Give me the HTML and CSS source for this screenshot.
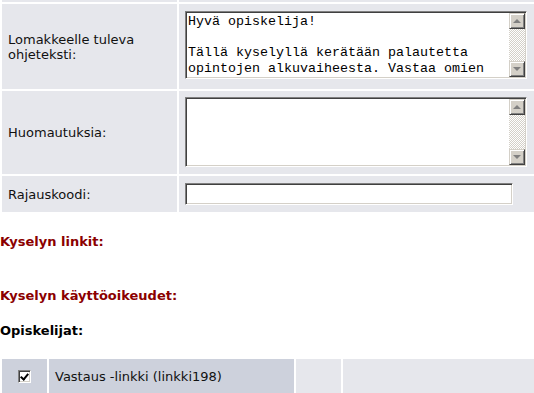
FILE: index.html
```html
<!DOCTYPE html>
<html lang="fi">
<head>
    <meta charset="UTF-8">
    <meta name="viewport" content="width=device-width, initial-scale=1.0">
    <title>Kyselyn tiedot</title>
    <link rel="stylesheet" href="styles.css">
</head>
<body>
    <div class="form-grid">
        <div class="cell"></div>
        <div class="cell"></div>

        <div class="cell label">Lomakkeelle tuleva ohjeteksti:</div>
        <div class="cell value">
            <div class="textbox tb-guide">
                <div class="textbox-text">Hyvä opiskelija!

Tällä kyselyllä kerätään palautetta opintojen alkuvaiheesta. Vastaa omien</div>
                <div class="scrollbar">
                    <span class="sb-btn sb-up"></span>
                    <span class="sb-track"></span>
                    <span class="sb-btn sb-down"></span>
                </div>
            </div>
        </div>

        <div class="cell label">Huomautuksia:</div>
        <div class="cell value value-notes">
            <div class="textbox tb-notes">
                <div class="textbox-text"></div>
                <div class="scrollbar">
                    <span class="sb-btn sb-up"></span>
                    <span class="sb-track"></span>
                    <span class="sb-btn sb-down"></span>
                </div>
            </div>
        </div>

        <div class="cell label">Rajauskoodi:</div>
        <div class="cell value">
            <div class="input"></div>
        </div>
    </div>

    <h4 class="section-title red first">Kyselyn linkit:</h4>
    <h4 class="section-title red second">Kyselyn käyttöoikeudet:</h4>
    <h4 class="section-title third">Opiskelijat:</h4>

    <div class="rights-row">
        <div class="rcell dark check-cell"><span class="checkbox"></span></div>
        <div class="rcell dark">Vastaus -linkki (linkki198)</div>
        <div class="rcell"></div>
        <div class="rcell"></div>
    </div>
</body>
</html>
```

FILE: styles.css
```css
* {
    box-sizing: border-box;
}
body {
    margin: 0;
    font-family: "DejaVu Sans", Verdana, sans-serif;
    font-size: 13px;
    color: #000;
    background: #fff;
    overflow: hidden;
}

/* form table */
.form-grid {
    display: grid;
    grid-template-columns: 175px 355px;
    grid-template-rows: 2px 85px 83px 36px;
    gap: 2px;
    padding-left: 2px;
}
.cell {
    background: #e6e7ec;
}
.label {
    display: flex;
    align-items: center;
    padding: 0 6px;
    line-height: 15px;
    color: #111;
}
.value {
    padding: 7px 6px 0 6px;
}
.value-notes {
    padding-top: 6px;
}

/* inset fields */
.textbox,
.input {
    background: #fff;
    border: 1px solid;
    border-color: #808080 #fff #fff #808080;
    box-shadow: inset 1px 1px #404040, inset -1px -1px #d4d0c8;
}
.textbox {
    display: flex;
    width: 342px;
    padding: 1px;
}
.tb-guide { height: 68px; }
.tb-notes { height: 70px; }
.textbox-text {
    flex: 1;
    padding: 1px 0 0 1px;
    overflow: hidden;
    font-family: "Liberation Mono", "Courier New", monospace;
    font-size: 13.33px;
    line-height: 15.5px;
    white-space: pre-wrap;
}
.input {
    width: 328px;
    height: 22px;
}

/* classic scrollbar */
.scrollbar {
    width: 16px;
    display: flex;
    flex-direction: column;
}
.sb-btn {
    height: 16px;
    flex: none;
    display: flex;
    align-items: center;
    justify-content: center;
    background: #d4d0c8;
    border: 1px solid;
    border-color: #d4d0c8 #404040 #404040 #d4d0c8;
    box-shadow: inset 1px 1px #fff, inset -1px -1px #808080;
}
.sb-up::before,
.sb-down::before {
    content: '';
    width: 0;
    height: 0;
    border-left: 4px solid transparent;
    border-right: 4px solid transparent;
}
.sb-up::before {
    border-bottom: 4px solid #808080;
}
.sb-down::before {
    border-top: 4px solid #808080;
}
.sb-track {
    flex: 1;
    background: repeating-conic-gradient(#d4d0c8 0 25%, #fff 0 50%) 0 0 / 2px 2px;
}

/* headings */
.section-title {
    margin: 0;
    font-size: 13px;
    line-height: 16px;
    font-weight: bold;
    color: #000;
}
.section-title.red {
    color: #8b0000;
}
.first { margin-top: 22px; }
.second { margin-top: 38px; }
.third { margin-top: 19px; }

/* rights row */
.rights-row {
    display: grid;
    grid-template-columns: 45px 245px 45px 191px;
    gap: 2px;
    padding-left: 2px;
    margin-top: 20px;
    height: 34px;
}
.rcell {
    background: #e6e7ec;
    display: flex;
    align-items: center;
    padding-left: 6px;
    color: #111;
}
.rcell.dark {
    background: #cdd1dc;
}
.check-cell {
    padding-left: 16px;
}
.checkbox {
    width: 13px;
    height: 13px;
    background: #fff;
    border: 1px solid;
    border-color: #808080 #fff #fff #808080;
    box-shadow: inset 1px 1px #404040, inset -1px -1px #d4d0c8;
    position: relative;
}
.checkbox::after {
    content: '';
    position: absolute;
    left: 3px;
    top: 1px;
    width: 3px;
    height: 6px;
    border: solid #000;
    border-width: 0 2px 2px 0;
    transform: rotate(40deg);
}
```
